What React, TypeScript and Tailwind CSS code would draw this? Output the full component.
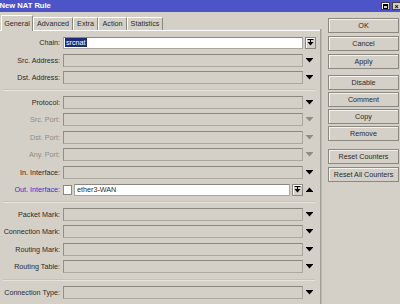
import React from "react";

const DownArrow = ({ gray = false }: { gray?: boolean }) => (
  <svg width="7" height="5" viewBox="0 0 7 5">
    <polygon points="0,0.5 7,0.5 3.5,4.5" fill={gray ? "#8f8c86" : "#000"} />
    <rect x="0" y="0" width="7" height="1" fill={gray ? "#8f8c86" : "#000"} />
  </svg>
);

const UpArrow = () => (
  <svg width="7" height="5" viewBox="0 0 7 5">
    <polygon points="0,4.5 7,4.5 3.5,0.5" fill="#000" />
    <rect x="0" y="4" width="7" height="1" fill="#000" />
  </svg>
);

const ComboIcon = () => (
  <svg width="7" height="7" viewBox="0 0 7 7">
    <rect x="0.5" y="0" width="6" height="1" fill="#000" />
    <rect x="3" y="1" width="1" height="2" fill="#000" />
    <polygon points="0.5,3 6.5,3 3.5,6.5" fill="#000" />
  </svg>
);

const Label = ({ text, color }: { text: string; color: string }) => (
  <span className={`w-[60px] shrink-0 text-right whitespace-nowrap leading-none ${color}`}>{text}</span>
);

const GrayField = () => (
  <div className="ml-[3px] h-[13px] w-[240px] shrink-0 border border-[#aaa79f] border-t-[#8a877f] border-l-[#928f88] bg-[#d4d0c8]" />
);

const FieldRow = ({ label, disabled = false }: { label: string; disabled?: boolean }) => (
  <div className="flex h-[17.5px] items-center">
    <Label text={label} color={disabled ? "text-[#8e8b84]" : "text-[#2a2a2a]"} />
    <GrayField />
    <div className="flex w-[13px] shrink-0 justify-center">
      <DownArrow gray={disabled} />
    </div>
  </div>
);

const Sep = ({ h }: { h: string }) => (
  <div className={`flex ${h} flex-col justify-center pl-[3px] pr-[5px]`}>
    <div className="h-px bg-[#c6c2ba]" />
    <div className="h-px bg-[#e6e3dd]" />
  </div>
);

const Btn = ({ text, mt }: { text: string; mt: string }) => (
  <div
    className={`${mt} flex h-[15px] w-[71px] items-center justify-center border border-[#8b8880] bg-[#d4d0c8] text-[7.2px] leading-none text-[#2a2a2a] shadow-[inset_1px_1px_0_#f4f2ee]`}
  >
    {text}
  </div>
);

const Tab = ({ text, w, selected = false }: { text: string; w: string; selected?: boolean }) => (
  <div
    className={`${w} flex shrink-0 items-center justify-center border-l border-t border-r border-l-white border-t-white border-r-[#8b8880] text-[7.2px] leading-none text-[#2a2a2a] ${
      selected ? "h-[16px] bg-[#d4d0c8] relative z-10 -mb-px" : "h-[13px] bg-[#d4d0c8]"
    }`}
  >
    {text}
  </div>
);

export default function App() {
  return (
    <div
      className="relative h-[304px] w-[400px] overflow-hidden bg-[#d4d0c8]"
      style={{ fontFamily: '"Liberation Sans", Arial, sans-serif' }}
    >
      {/* Title bar */}
      <div className="flex h-[12px] items-center justify-between bg-[#4d54c8] pr-0">
        <span className="-ml-[0.5px] text-[7.6px] font-bold leading-none text-white">New NAT Rule</span>
        <div className="flex items-center gap-[2px]">
          <div className="flex h-[8px] w-[9px] items-center justify-center border border-[#404040] bg-[#d4d0c8] shadow-[inset_1px_1px_0_#fff]">
            <div className="h-[5px] w-[5px] border border-black border-t-2" />
          </div>
          <div className="flex h-[8px] w-[8px] items-center justify-center border border-[#404040] border-r-0 bg-[#d4d0c8] text-[7px] font-bold leading-none text-black">
            ×
          </div>
        </div>
      </div>

      <div className="flex">
        {/* Left panel */}
        <div className="flex w-[320px] shrink-0 flex-col">
          {/* Tabs */}
          <div className="mt-[2px] flex h-[16px] items-end pl-px">
            <Tab text="General" w="w-[32px]" selected />
            <Tab text="Advanced" w="w-[40px]" />
            <Tab text="Extra" w="w-[25px]" />
            <Tab text="Action" w="w-[29px]" />
            <Tab text="Statistics" w="w-[36px]" />
          </div>
          <div className="h-px bg-white" />

          {/* Form */}
          <div className="flex flex-col pt-[3px] text-[7.2px]">
            {/* Chain */}
            <div className="flex h-[17.5px] items-center">
              <Label text="Chain:" color="text-[#2a2a2a]" />
              <div className="ml-[3px] flex h-[12px] w-[240px] shrink-0 items-center border border-[#aaa79f] border-t-[#8a877f] bg-white pl-px">
                <span className="flex h-[9px] items-center bg-[#1c2a78] px-px leading-none text-white">srcnat</span>
              </div>
              <div className="ml-[2px] flex h-[12px] w-[11px] shrink-0 items-center justify-center border border-[#8b8880] bg-[#d4d0c8] shadow-[inset_1px_1px_0_#fff]">
                <ComboIcon />
              </div>
            </div>
            <FieldRow label="Src. Address:" />
            <FieldRow label="Dst. Address:" />
            <Sep h="h-[7px]" />
            <FieldRow label="Protocol:" />
            <FieldRow label="Src. Port:" disabled />
            <FieldRow label="Dst. Port:" disabled />
            <FieldRow label="Any. Port:" disabled />
            <FieldRow label="In. Interface:" />
            {/* Out interface */}
            <div className="flex h-[17.5px] items-center">
              <Label text="Out. Interface:" color="text-[#2a37d4]" />
              <div className="ml-[3px] h-[10px] w-[9px] shrink-0 border border-[#8b8880] bg-white" />
              <div className="ml-[2px] flex h-[12px] w-[216px] shrink-0 items-center border border-[#aaa79f] border-t-[#8a877f] bg-white pl-[2px]">
                <span className="leading-none text-[#2a2a2a]">ether3-WAN</span>
              </div>
              <div className="ml-[2px] flex h-[12px] w-[11px] shrink-0 items-center justify-center border border-[#8b8880] bg-[#d4d0c8] shadow-[inset_1px_1px_0_#fff]">
                <ComboIcon />
              </div>
              <div className="flex w-[13px] shrink-0 justify-center">
                <UpArrow />
              </div>
            </div>
            <Sep h="h-[7px]" />
            <FieldRow label="Packet Mark:" />
            <FieldRow label="Connection Mark:" />
            <FieldRow label="Routing Mark:" />
            <FieldRow label="Routing Table:" />
            <Sep h="h-[8px]" />
            <FieldRow label="Connection Type:" />
          </div>
        </div>

        {/* Divider */}
        <div className="mt-[17px] flex h-[300px] shrink-0">
          <div className="w-px bg-[#a19e97]" />
          <div className="w-px bg-[#bcb8b0]" />
        </div>

        {/* Right buttons */}
        <div className="ml-[6px] flex flex-col">
          <Btn text="OK" mt="mt-[6px]" />
          <Btn text="Cancel" mt="mt-[3px]" />
          <Btn text="Apply" mt="mt-[3px]" />
          <Btn text="Disable" mt="mt-[6px]" />
          <Btn text="Comment" mt="mt-[2px]" />
          <Btn text="Copy" mt="mt-[2px]" />
          <Btn text="Remove" mt="mt-[2px]" />
          <Btn text="Reset Counters" mt="mt-[8px]" />
          <Btn text="Reset All Counters" mt="mt-[3px]" />
        </div>
      </div>
    </div>
  );
}
